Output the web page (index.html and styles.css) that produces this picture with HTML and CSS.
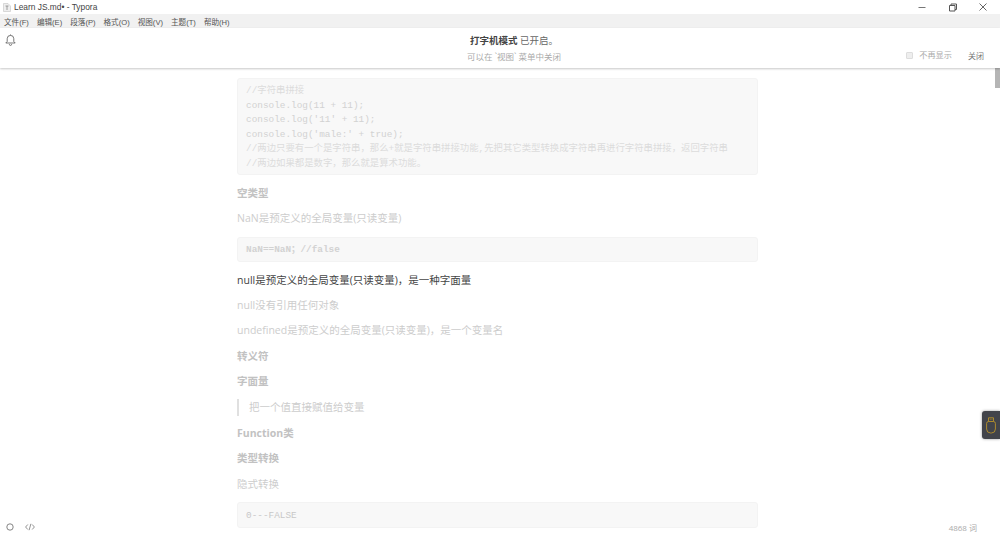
FILE: index.html
```html
<!DOCTYPE html>
<html lang="zh">
<head>
<meta charset="utf-8">
<title>Learn JS.md• - Typora</title>
<link rel="stylesheet" href="styles.css">
</head>
<body>
<div class="app">
  <header class="titlebar">
    <svg class="file-icon" width="8" height="9" viewBox="0 0 8 9"><path d="M.5.500h4.500l2.500 2.500v5.500h-7z" fill="#eee" stroke="#ccc" stroke-width=".7"/><path d="M2.500 3h3M4 3v4" stroke="#888" stroke-width=".8" fill="none"/></svg>
    <span class="title-text">Learn JS.md• - Typora</span>
    <div class="win-controls">
      <svg width="10" height="10" viewBox="0 0 10 10"><path d="M1.500 5.500h7" stroke="#777" fill="none"/></svg>
      <svg width="10" height="10" viewBox="0 0 10 10"><path d="M1.500 3.500h5.500v5.500h-5.500zM3 3.500v-1.500h5.500v5.500h-1.500" stroke="#555" fill="none"/></svg>
      <svg width="10" height="10" viewBox="0 0 10 10"><path d="M1.500 1.500l7 7M8.500 1.500l-7 7" stroke="#555" stroke-width=".9" fill="none"/></svg>
    </div>
  </header>
  <nav class="menubar">
    <span>文件(F)</span><span>编辑(E)</span><span>段落(P)</span><span>格式(O)</span><span>视图(V)</span><span>主题(T)</span><span>帮助(H)</span>
  </nav>
  <section class="notice">
    <svg class="bell" width="11" height="12" viewBox="0 0 11 12"><path d="M.8 9h9.400L8.800 7.500V4.700a3.300 3.300 0 0 0-6.600 0v2.800zM4.300 10.200a1.200 1.200 0 0 0 2.400 0M5.500 1.400V.5" fill="none" stroke="#555" stroke-width=".8"/></svg>
    <div class="notice-text">
      <div class="notice-title"><b>打字机模式</b> 已开启。</div>
      <div class="notice-sub">可以在 `视图` 菜单中关闭</div>
    </div>
    <div class="notice-actions">
      <span class="checkbox"></span><span class="no-show">不再显示</span><span class="close">关闭</span>
    </div>
  </section>
  <main class="editor">
    <div class="doc">
      <pre class="code first"><span class="c1">//字符串拼接</span>
console.log(11 + 11);
console.log('11' + 11);
console.log('male:' + true);
<span class="c2">//两边只要有一个是字符串，那么+就是字符串拼接功能,先把其它类型转换成字符串再进行字符串拼接，返回字符串</span>
<span class="c2">//两边如果都是数字，那么就是算术功能。</span></pre>
      <p class="strong h1">空类型</p>
      <p class="p2">NaN是预定义的全局变量(只读变量)</p>
      <pre class="code single bold">NaN==NaN；//false</pre>
      <p class="active">null是预定义的全局变量(只读变量)，是一种字面量</p>
      <p class="p3">null没有引用任何对象</p>
      <p class="p4">undefined是预定义的全局变量(只读变量)，是一个变量名</p>
      <p class="strong p5">转义符</p>
      <p class="strong p4">字面量</p>
      <blockquote class="quote">把一个值直接赋值给变量</blockquote>
      <p class="strong p6">Function类</p>
      <p class="strong p4">类型转换</p>
      <p class="p5">隐式转换</p>
      <pre class="code single last">0---FALSE</pre>
    </div>
    <div class="scroll-thumb"></div>
  </main>
  <footer class="statusbar">
    <div class="status-left">
      <svg width="8" height="8" viewBox="0 0 8 8"><circle cx="4" cy="4" r="3.200" fill="none" stroke="#777" stroke-width=".9"/></svg>
      <svg width="10" height="8" viewBox="0 0 10 8"><path d="M2.800 1.500L.6 4l2.200 2.500M7.200 1.500L9.400 4 7.200 6.500M5.900.8L4.100 7.200" fill="none" stroke="#777" stroke-width=".8"/></svg>
    </div>
    <span class="count">4868 词</span>
  </footer>
  <div class="widget">
    <svg width="10" height="17" viewBox="0 0 10 17"><path d="M2.500 4.500V.8h5v3.700M.6 6.500a2 2 0 0 1 2-2h4.800a2 2 0 0 1 2 2V12a4 4 0 0 1-4 4h-.8a4 4 0 0 1-4-4z" fill="none" stroke="#b8922a" stroke-width=".9"/><path d="M3.800 2.300h.9M5.500 2.300h.9" stroke="#b8922a" stroke-width=".8"/></svg>
  </div>
</div>
</body>
</html>
```
FILE: styles.css
```css
* { box-sizing: border-box; }
html, body { margin: 0; height: 100%; overflow: hidden; }
body { background: #fff; font-family: "Open Sans", "Noto Sans CJK SC", sans-serif; color: #333; }
.app { position: relative; display: flex; flex-direction: column; width: 1000px; height: 536px; overflow: hidden; }

.titlebar { flex: none; height: 14px; display: flex; align-items: center; padding-left: 3px; background: #fff; }
.file-icon { flex: none; margin-right: 3px; }
.title-text { font-family: "Liberation Sans", "Noto Sans CJK SC", sans-serif; font-size: 8.400px; color: #444; }
.win-controls { margin-left: auto; display: flex; gap: 20.500px; padding-right: 12px; }

.menubar { flex: none; height: 14px; display: flex; align-items: center; gap: 8px; padding-left: 4px; background: #f1f1f1; font-family: "Liberation Sans", "Noto Sans CJK SC", sans-serif; font-size: 7.600px; color: #555; white-space: nowrap; }

.notice { flex: none; position: relative; z-index: 2; height: 40px; display: flex; background: #fff; box-shadow: 0 1px 2px rgba(0,0,0,.22); }
.bell { position: absolute; left: 5px; top: 6px; }
.notice-text { width: 100%; text-align: center; padding: 6px 0 0 28px; }
.notice-title { font-size: 9.500px; line-height: 14px; color: #666; }
.notice-title b { color: #444; }
.notice-sub { font-size: 8.500px; line-height: 12px; margin-top: 3px; color: #aaa; }
.notice-actions { position: absolute; right: 16px; top: 21px; display: flex; align-items: center; font-size: 8px; line-height: 12px; }
.checkbox { width: 7px; height: 7px; margin-right: 6px; border: 1px solid #ddd; border-radius: 1px; background: #eee; }
.no-show { margin: 0 16px 1px 0; font-size: 8.200px; color: #aaa; }
.close { color: #777; }

.editor { flex: 1; position: relative; overflow: hidden; background: #fff; }
.doc { width: 521px; margin-left: 237px; padding-top: 10px; }
.doc p { margin: 0; height: 17px; font-size: 10.500px; line-height: 17px; color: #cdcdcd; }
.doc .strong { font-weight: 700; color: #c2c2c2; }
.doc .active { margin-top: 10px; color: #444; }
.doc .h1 { margin-top: 10px; }
.doc .p2 { margin-top: 8px; }
.doc .p3 { margin-top: 8px; }
.doc .p4 { margin-top: 8px; }
.doc .p5 { margin-top: 9px; }
.doc .p6 { margin-top: 9px; }

.code { margin: 0; padding: 5px 8px; background: #f8f8f8; border: 1px solid #f3f3f3; border-radius: 3px; font-family: "Liberation Mono", "Noto Sans CJK SC", monospace; font-size: 9.400px; line-height: 14.600px; color: #d2d2d2; white-space: pre; }
.code.first { height: 97px; }
.code.single { height: 25px; margin-top: 10px; line-height: 24px; padding-top: 0; padding-bottom: 0; }
.code.bold { font-weight: 700; }
.code.last { height: 26px; margin-top: 9px; line-height: 25px; font-weight: 400; color: #c8c8c8; }
.c1, .c2 { color: #dcdcdc; }

.quote { margin: 9px 0 0; height: 17px; padding-left: 10px; border-left: 2px solid #e0e0e0; font-size: 10.500px; line-height: 17px; color: #cdcdcd; }

.scroll-thumb { position: absolute; right: 0; top: 0; width: 5px; height: 20px; background: #b5b5b5; }

.statusbar { position: absolute; left: 0; right: 0; bottom: 3px; z-index: 3; height: 12px; display: flex; align-items: center; justify-content: space-between; padding: 0 23px 0 6px; }
.status-left { display: flex; align-items: center; gap: 11px; }
.count { font-size: 8px; font-weight: 400; color: #aaa; }

.widget { position: absolute; right: 0; top: 411px; z-index: 4; width: 18px; height: 28px; display: flex; align-items: center; justify-content: center; background: #42444a; border-radius: 3px 0 0 3px; box-shadow: 0 0 3px rgba(0,0,0,.4); }
```
